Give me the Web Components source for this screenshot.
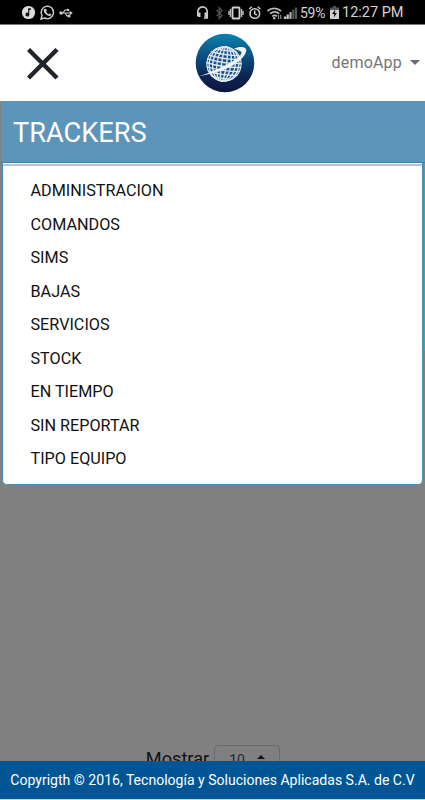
<!DOCTYPE html>
<html lang="es">
<head>
<meta charset="utf-8">
<meta name="viewport" content="width=device-width, initial-scale=1">
<title>Trackers</title>
<style>
    html, body { margin: 0; height: 100%; }
    body { font-family: Roboto, "Liberation Sans", sans-serif; overflow: hidden; }
</style>
</head>
<body>
<tracker-app>
    <status-bar slot="top" battery="59%" time="12:27 PM"></status-bar>
    <app-header slot="top" user="demoApp"></app-header>
    <tracker-menu slot="menu" heading="TRACKERS">
        <menu-entry>ADMINISTRACION</menu-entry>
        <menu-entry>COMANDOS</menu-entry>
        <menu-entry>SIMS</menu-entry>
        <menu-entry>BAJAS</menu-entry>
        <menu-entry>SERVICIOS</menu-entry>
        <menu-entry>STOCK</menu-entry>
        <menu-entry>EN TIEMPO</menu-entry>
        <menu-entry>SIN REPORTAR</menu-entry>
        <menu-entry>TIPO EQUIPO</menu-entry>
    </tracker-menu>
    <page-size label="Mostrar" value="10"></page-size>
    <app-footer slot="bottom">Copyrigth © 2016, Tecnología y Soluciones Aplicadas S.A. de C.V</app-footer>
</tracker-app>

<script>
class TrackerApp extends HTMLElement {
    constructor() {
        super();
        this.attachShadow({ mode: 'open' });
        this.shadowRoot.innerHTML = `
            <style>
                :host {
                    display: flex;
                    flex-direction: column;
                    width: 425px;
                    height: 800px;
                    overflow: hidden;
                    background: #808080;
                }
                main {
                    flex: 1;
                    min-height: 0;
                    display: flex;
                    flex-direction: column;
                    overflow: hidden;
                }
                .content { margin-top: 260px; }
            </style>
            <slot name="top"></slot>
            <main>
                <slot name="menu"></slot>
                <div class="content"><slot></slot></div>
            </main>
            <slot name="bottom"></slot>
        `;
    }
}

class StatusBar extends HTMLElement {
    constructor() {
        super();
        this.attachShadow({ mode: 'open' });
    }

    connectedCallback() {
        this.shadowRoot.innerHTML = `
            <style>
                :host {
                    display: flex;
                    box-sizing: border-box;
                    flex: none;
                    height: 25px;
                    padding: 1px 21px 0;
                    align-items: center;
                    justify-content: space-between;
                    background: #000;
                    border-bottom: 1px solid #777;
                    color: #d4d4d4;
                    font-size: 14.5px;
                }
                div { display: flex; align-items: center; }
                svg { display: block; overflow: visible; }
                .left { gap: 4px; }
                .battery { margin-left: 3px; width: 26px; font-size: 14px; letter-spacing: -0.3px; }
                .time { margin-left: 3px; width: 62px; white-space: nowrap; }
            </style>
            <div class="left">
                <svg width="15" height="15" viewBox="0 0 15 15">
                    <circle cx="7.5" cy="7.5" r="6.6" fill="#dcdcdc"/>
                    <path d="M7.2 3.2h2.6v1.7H8.3v4.8a1.9 1.9 0 1 1-1.1-1.8z" fill="#111"/>
                </svg>
                <svg width="15" height="15" viewBox="0 0 15 15" fill="none" stroke="#ccc">
                    <path d="M1 14l1-3.5A6.2 6.2 0 1 1 4.7 13z" stroke-width="1.4"/>
                    <path d="M5 3.7l1.3.4.5 1.9-.8.8c.6 1.2 1.4 1.9 2.6 2.5l1-.9 1.7.9c.2.8-.9 1.9-2 1.7-2.8-.5-5.3-3.2-5.6-5.3-.1-.9.5-1.9 1.3-2z" fill="#ccc" stroke="none"/>
                </svg>
                <svg width="14" height="12" viewBox="0 0 14 12" fill="none" stroke="#ccc" stroke-width="1.2">
                    <path d="M2 6h10M4 6l2-3h2.2M6 6l2 3h1.5"/>
                    <circle cx="2" cy="6" r="1.7" fill="#ccc" stroke="none"/>
                    <path d="M10.800 3.800l3 2.200-3 2.200z" fill="#ccc" stroke="none"/>
                    <circle cx="9" cy="3" r="1.3" fill="#ccc" stroke="none"/>
                    <path d="M8.800 7.700h2.600v2.600H8.800z" fill="#ccc" stroke="none"/>
                </svg>
            </div>
            <div>
                <svg width="101" height="16" viewBox="0 0 101 16" fill="none">
                    <!-- headset -->
                    <path d="M1.8 10V6.6a4.7 4.7 0 0 1 9.4 0V13H8" stroke="#ccc" stroke-width="1.7"/>
                    <path d="M1 7.500h3.500V12H2.300L1 10.800zM8.500 7.500H12v5H8.500z" fill="#ccc"/>
                    <!-- bluetooth -->
                    <path d="M20.500 4.800l5.500 5.700-2.800 3V2.500l2.800 2.900-5.500 5.700" stroke="#555" stroke-width="1.300"/>
                    <!-- vibrate -->
                    <rect x="36.500" y="2.500" width="7" height="11" rx=".7" stroke="#d0d0d0" stroke-width="1.900"/>
                    <path d="M34.400 4v8M45.600 4v8M32.900 6v4M47.100 6v4" stroke="#bbb" stroke-width="1.300"/>
                    <!-- alarm -->
                    <circle cx="58.800" cy="8.500" r="4.800" stroke="#ccc" stroke-width="1.600"/>
                    <path d="M58.700 5.500v3.300l2.200 1.200M53.200 4l2.700-2.300M64.400 4l-2.700-2.300" stroke="#ccc" stroke-width="1.500"/>
                    <!-- wifi -->
                    <path d="M71.500 6c4-3.500 9.500-3.500 13.500 0M74 8.700c3-2.300 6.500-2.300 9.300 0M76.300 11.300c1.600-1.300 3.300-1.300 4.600 0" stroke="#bbb" stroke-width="1.700"/>
                    <circle cx="78.200" cy="13.300" r="1.200" fill="#bbb"/>
                    <path d="M82.500 14v-4M84.700 14v-4" stroke="#888" stroke-width="1.200"/>
                    <!-- signal -->
                    <path d="M89 14v-2.500M91.700 14V9.500" stroke="#ccc" stroke-width="2.200"/>
                    <path d="M94.500 14V7" stroke="#aaa" stroke-width="2.200"/>
                    <path d="M97.300 14V4.500M100 14V2.500" stroke="#555" stroke-width="2.200"/>
                </svg>
                <span class="battery">${this.getAttribute('battery')}</span>
                <svg style="margin-left:4px" width="9" height="14" viewBox="0 0 9 14">
                    <path d="M3 0h3v1.500h3V4H0V1.500h3z" fill="#555"/>
                    <path d="M0 4h9v9H0z" fill="#d0d0d0"/>
                    <path d="M5.200 3.500L2 8h2.200L3.800 11.500 7 7H5z" fill="#111"/>
                </svg>
                <span class="time">${this.getAttribute('time')}</span>
            </div>
        `;
    }
}

class GlobeLogo extends HTMLElement {
    constructor() {
        super();
        this.attachShadow({ mode: 'open' });
        this.shadowRoot.innerHTML = `
            <style>
                :host { display: block; width: 60px; height: 60px; }
                svg { display: block; }
            </style>
            <svg width="60" height="60" viewBox="0 0 60 60">
                <defs>
                    <linearGradient id="sky" x1="0" y1="0" x2="0" y2="1">
                        <stop offset="0" stop-color="#0b83ad"/>
                        <stop offset=".35" stop-color="#0b5484"/>
                        <stop offset=".7" stop-color="#0c2856"/>
                        <stop offset="1" stop-color="#0d1440"/>
                    </linearGradient>
                    <clipPath id="ball"><circle cx="29" cy="31" r="17.800"/></clipPath>
                </defs>
                <circle cx="30" cy="30" r="29.300" fill="url(#sky)"/>
                <circle cx="29" cy="31" r="17.800" fill="#16508a"/>
                <g clip-path="url(#ball)">
                    <g transform="rotate(8 29 31)" fill="none" stroke="#dfe5ec" stroke-width="1.350">
                        <circle cx="29" cy="31" r="17.200"/>
                        <ellipse cx="29" cy="31" rx="14.800" ry="17.500"/>
                        <ellipse cx="29" cy="31" rx="11.200" ry="17.500"/>
                        <ellipse cx="29" cy="31" rx="7" ry="17.500"/>
                        <ellipse cx="29" cy="31" rx="2.500" ry="17.500"/>
                        <path d="M11 16q18 3 37 0M11 20q18 3 37 0M11 24q18 3 37 0M11 28q18 3 37 0M11 32q18 3 37 0M11 36q18 3 37 0M11 40q18 3 37 0M11 44q18 3 37 0"/>
                    </g>
                </g>
                <path d="M39 15.500C44 13.500 50 13 51.200 16.500C52 22 43 30 34 34.500C25 39 15 41 4 43.300C15 39.500 25 35.500 34 30.500C40 27.500 47 22 46.500 19.300C46 17.300 43 18 39 15.500Z" fill="#f4f8fa"/>
            </svg>
        `;
    }
}

class AppHeader extends HTMLElement {
    constructor() {
        super();
        this.attachShadow({ mode: 'open' });
    }

    connectedCallback() {
        this.shadowRoot.innerHTML = `
            <style>
                :host {
                    display: grid;
                    grid-template-columns: 1fr 60px 1fr;
                    flex: none;
                    align-items: center;
                    height: 76px;
                    background: #fff;
                }
                button { border: 0; padding: 0; background: none; cursor: pointer; }
                .close { width: 32px; height: 32px; margin: 2px 0 0 26.500px; }
                .close svg { display: block; }
                globe-logo { margin-left: 12.500px; }
                .user {
                    display: flex;
                    align-items: center;
                    justify-self: end;
                    gap: 8px;
                    margin-top: -2px;
                    padding-right: 5px;
                    color: #757575;
                    font: 400 16px Roboto, sans-serif;
                    letter-spacing: 0.2px;
                }
                .caret {
                    border: 5px solid transparent;
                    border-top-color: #6b6b6b;
                    border-bottom: 0;
                }
            </style>
            <button class="close" aria-label="Cerrar">
                <svg width="32" height="32" viewBox="0 0 32 32" stroke="#21252b" stroke-width="4.400">
                    <path d="M1.500 1.500l28.500 28.500M30 1.500L1.500 30"/>
                </svg>
            </button>
            <globe-logo></globe-logo>
            <button class="user">
                <span>${this.getAttribute('user')}</span>
                <span class="caret"></span>
            </button>
        `;
    }
}

class TrackerMenu extends HTMLElement {
    constructor() {
        super();
        this.attachShadow({ mode: 'open' });
    }

    connectedCallback() {
        this.shadowRoot.innerHTML = `
            <style>
                :host {
                    display: block;
                    flex: none;
                    background: linear-gradient(#5c94ba, #5c94ba) right top / 1px 250px no-repeat;
                }
                h1 {
                    box-sizing: border-box;
                    height: 62px;
                    margin: 0 0 0 1px;
                    padding-left: 12px;
                    background: #5c94ba;
                    border-bottom: 1px solid #3585aa;
                    color: #fff;
                    font-size: 27.200px;
                    font-weight: 400;
                    line-height: 64px;
                }
                nav {
                    box-sizing: border-box;
                    height: 322px;
                    margin: 0 2px 0 2px;
                    padding: 10px 0 0 27.500px;
                    background: #fff;
                    border: 1px solid #4590b8;
                    border-top: 0;
                    border-radius: 0 0 5px 5px;
                    box-shadow: inset 0 1px #fff, inset 0 3px #b0c4da;
                }
            </style>
            <h1>${this.getAttribute('heading')}</h1>
            <nav><slot></slot></nav>
        `;
    }
}

class MenuEntry extends HTMLElement {
    constructor() {
        super();
        this.attachShadow({ mode: 'open' });
        this.shadowRoot.innerHTML = `
            <style>
                :host {
                    display: block;
                    height: 33.500px;
                    line-height: 36px;
                    color: #111;
                    font-size: 16.200px;
                    cursor: pointer;
                }
            </style>
            <slot></slot>
        `;
    }
}

class PageSize extends HTMLElement {
    constructor() {
        super();
        this.attachShadow({ mode: 'open' });
    }

    connectedCallback() {
        this.shadowRoot.innerHTML = `
            <style>
                :host {
                    display: flex;
                    align-items: center;
                    justify-content: center;
                    gap: 5px;
                    height: 29px;
                    padding-left: 1px;
                    color: #111;
                    font-size: 18.200px;
                }
                .label { margin-top: -2px; }
                .select {
                    display: flex;
                    box-sizing: border-box;
                    width: 66px;
                    height: 29px;
                    align-items: center;
                    gap: 12px;
                    padding-left: 14px;
                    border: 1px solid #666c72;
                    border-radius: 4px;
                    color: #24282d;
                    font-size: 14px;
                }
                .arrow {
                    border: 4px solid transparent;
                    border-bottom-color: #111;
                    border-top: 0;
                    margin-top: -5px;
                }
            </style>
            <span class="label">${this.getAttribute('label')}</span>
            <span class="select">${this.getAttribute('value')}<span class="arrow"></span></span>
        `;
    }
}

class AppFooter extends HTMLElement {
    constructor() {
        super();
        this.attachShadow({ mode: 'open' });
        this.shadowRoot.innerHTML = `
            <style>
                :host {
                    display: block;
                    box-sizing: border-box;
                    flex: none;
                    height: 39px;
                    background: #005694;
                    border-bottom: 1px solid #cbd5df;
                    color: #fff;
                    font-size: 14.050px;
                    line-height: 38px;
                    text-align: center;
                    white-space: nowrap;
                }
            </style>
            <slot></slot>
        `;
    }
}

customElements.define('tracker-app', TrackerApp);
customElements.define('status-bar', StatusBar);
customElements.define('globe-logo', GlobeLogo);
customElements.define('app-header', AppHeader);
customElements.define('tracker-menu', TrackerMenu);
customElements.define('menu-entry', MenuEntry);
customElements.define('page-size', PageSize);
customElements.define('app-footer', AppFooter);
</script>
</body>
</html>
